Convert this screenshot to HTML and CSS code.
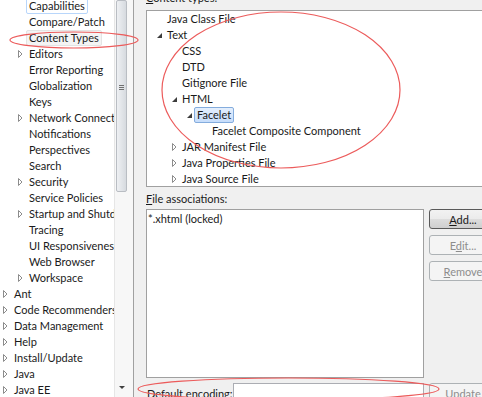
FILE: index.html
```html
<!DOCTYPE html>
<html>
<head>
    <meta charset="UTF-8">
    <title>Preferences - Content Types</title>
    <link rel="stylesheet" href="styles.css">
</head>
<body>
    <div class="window">
        <div class="nav">
            <div class="nav-tree">
                <div class="row l2"><span class="exp"></span><span class="label hover">Capabilities</span></div>
                <div class="row l2"><span class="exp"></span><span class="label">Compare/Patch</span></div>
                <div class="row l2"><span class="exp"></span><span class="label current">Content Types</span></div>
                <div class="row l2"><span class="exp"><svg width="11" height="16"><path d="M3.5 4.5 V11.5 L7 8 Z" class="closed"/></svg></span><span class="label">Editors</span></div>
                <div class="row l2"><span class="exp"></span><span class="label">Error Reporting</span></div>
                <div class="row l2"><span class="exp"></span><span class="label">Globalization</span></div>
                <div class="row l2"><span class="exp"></span><span class="label">Keys</span></div>
                <div class="row l2"><span class="exp"><svg width="11" height="16"><path d="M3.5 4.5 V11.5 L7 8 Z" class="closed"/></svg></span><span class="label">Network Connections</span></div>
                <div class="row l2"><span class="exp"></span><span class="label">Notifications</span></div>
                <div class="row l2"><span class="exp"></span><span class="label">Perspectives</span></div>
                <div class="row l2"><span class="exp"></span><span class="label">Search</span></div>
                <div class="row l2"><span class="exp"><svg width="11" height="16"><path d="M3.5 4.5 V11.5 L7 8 Z" class="closed"/></svg></span><span class="label">Security</span></div>
                <div class="row l2"><span class="exp"></span><span class="label">Service Policies</span></div>
                <div class="row l2"><span class="exp"><svg width="11" height="16"><path d="M3.5 4.5 V11.5 L7 8 Z" class="closed"/></svg></span><span class="label">Startup and Shutdown</span></div>
                <div class="row l2"><span class="exp"></span><span class="label">Tracing</span></div>
                <div class="row l2"><span class="exp"></span><span class="label">UI Responsiveness Monitoring</span></div>
                <div class="row l2"><span class="exp"></span><span class="label">Web Browser</span></div>
                <div class="row l2"><span class="exp"><svg width="11" height="16"><path d="M3.5 4.5 V11.5 L7 8 Z" class="closed"/></svg></span><span class="label">Workspace</span></div>
                <div class="row l1"><span class="exp"><svg width="11" height="16"><path d="M3.5 4.5 V11.5 L7 8 Z" class="closed"/></svg></span><span class="label">Ant</span></div>
                <div class="row l1"><span class="exp"><svg width="11" height="16"><path d="M3.5 4.5 V11.5 L7 8 Z" class="closed"/></svg></span><span class="label">Code Recommenders</span></div>
                <div class="row l1"><span class="exp"><svg width="11" height="16"><path d="M3.5 4.5 V11.5 L7 8 Z" class="closed"/></svg></span><span class="label">Data Management</span></div>
                <div class="row l1"><span class="exp"><svg width="11" height="16"><path d="M3.5 4.5 V11.5 L7 8 Z" class="closed"/></svg></span><span class="label">Help</span></div>
                <div class="row l1"><span class="exp"><svg width="11" height="16"><path d="M3.5 4.5 V11.5 L7 8 Z" class="closed"/></svg></span><span class="label">Install/Update</span></div>
                <div class="row l1"><span class="exp"><svg width="11" height="16"><path d="M3.5 4.5 V11.5 L7 8 Z" class="closed"/></svg></span><span class="label">Java</span></div>
                <div class="row l1"><span class="exp"><svg width="11" height="16"><path d="M3.5 4.5 V11.5 L7 8 Z" class="closed"/></svg></span><span class="label">Java EE</span></div>
            </div>
            <div class="vscroll">
                <div class="thumb"><span class="grip"></span></div>
                <div class="arrow-down"></div>
            </div>
        </div>

        <div class="page">
            <div class="caption top"><u>C</u>ontent types:</div>
            <div class="tree-box">
                <div class="row t0"><span class="exp"></span><span class="label">Java Class File</span></div>
                <div class="row t0"><span class="exp"><svg width="12" height="16"><path d="M10 6 V11 H5 Z" class="open"/></svg></span><span class="label">Text</span></div>
                <div class="row t1"><span class="exp"></span><span class="label">CSS</span></div>
                <div class="row t1"><span class="exp"></span><span class="label">DTD</span></div>
                <div class="row t1"><span class="exp"></span><span class="label">Gitignore File</span></div>
                <div class="row t1"><span class="exp"><svg width="12" height="16"><path d="M10 6 V11 H5 Z" class="open"/></svg></span><span class="label">HTML</span></div>
                <div class="row t2"><span class="exp"><svg width="12" height="16"><path d="M10 6 V11 H5 Z" class="open"/></svg></span><span class="label selected">Facelet</span></div>
                <div class="row t3"><span class="exp"></span><span class="label">Facelet Composite Component</span></div>
                <div class="row t1"><span class="exp"><svg width="12" height="16"><path d="M5.5 4.5 V11.5 L9 8 Z" class="closed"/></svg></span><span class="label">JAR Manifest File</span></div>
                <div class="row t1"><span class="exp"><svg width="12" height="16"><path d="M5.5 4.5 V11.5 L9 8 Z" class="closed"/></svg></span><span class="label">Java Properties File</span></div>
                <div class="row t1"><span class="exp"><svg width="12" height="16"><path d="M5.5 4.5 V11.5 L9 8 Z" class="closed"/></svg></span><span class="label">Java Source File</span></div>
            </div>

            <div class="caption"><u>F</u>ile associations:</div>
            <div class="assoc">
                <div class="list-box">
                    <div class="list-item">*.xhtml (locked)</div>
                </div>
                <div class="buttons">
                    <button class="btn default"><u>A</u>dd...</button>
                    <button class="btn" disabled>E<u>d</u>it...</button>
                    <button class="btn" disabled><u>R</u>emove</button>
                </div>
            </div>

            <div class="encoding">
                <label class="enc-label">Default encoding:</label>
                <input class="enc-input" type="text">
                <button class="btn" disabled>Update</button>
            </div>
        </div>

        <!-- red marks drawn over the screenshot -->
        <svg class="marks" width="482" height="397">
            <ellipse cx="74" cy="40" rx="64" ry="8"/>
            <ellipse cx="281" cy="90" rx="119" ry="78"/>
            <ellipse cx="288.5" cy="389" rx="150.5" ry="11"/>
        </svg>
    </div>
</body>
</html>
```

FILE: styles.css
```css
body {
    margin: 0;
    padding: 0;
    font-family: Lato, "Liberation Sans", sans-serif;
    font-size: 11px;
    color: #1a1a1a;
    background-color: #f0f0f0;
}

.window {
    position: relative;
    display: flex;
    width: 482px;
    height: 397px;
    overflow: hidden;
    background-color: #f0f0f0;
}

/* left preference tree */

.nav {
    display: flex;
    width: 133px;
    flex-shrink: 0;
    background: #fff;
    border-right: 1px solid #a0a0a0;
}

.nav-tree {
    width: 114px;
    flex-shrink: 0;
    overflow: hidden;
    margin-top: -2px;
}

.row {
    display: flex;
    align-items: center;
    height: 16px;
    white-space: nowrap;
}

.exp {
    display: inline-block;
    width: 11px;
    height: 16px;
    flex-shrink: 0;
}

.exp svg {
    display: block;
}

.closed {
    fill: #fff;
    stroke: #8c8c8c;
    stroke-width: 1;
}

.open {
    fill: #3c3c3c;
}

.label {
    display: inline-block;
    height: 14px;
    line-height: 14px;
    padding: 0 2px;
    border: 1px solid transparent;
    border-radius: 2px;
}

.l1 {
    padding-left: 0;
}

.l2 {
    padding-left: 15px;
}

.label.hover {
    border-color: #b8d6fb;
}

.label.current {
    background: #f4f4f4;
    border-color: #e4e4e4;
}

.vscroll {
    display: flex;
    flex-direction: column;
    width: 18px;
    background: #f7f7f7;
    border-left: 1px solid #e6e6e6;
}

.thumb {
    position: relative;
    width: 9px;
    height: 190px;
    margin-left: 1px;
    border: 1px solid #b9bdc3;
    border-radius: 2px;
    background: linear-gradient(to right, #eef0f3, #d6dadf);
}

.grip {
    display: block;
    width: 5px;
    height: 5px;
    margin: 84px auto 0;
    background: repeating-linear-gradient(#707070 0 1px, transparent 1px 2px);
}

.arrow-down {
    width: 0;
    height: 0;
    margin: auto 0 8px 4px;
    border-left: 3px solid transparent;
    border-right: 3px solid transparent;
    border-top: 3px solid #404040;
}

/* right page */

.page {
    flex: 1;
    min-width: 0;
    display: flex;
    flex-direction: column;
    padding-left: 12px;
    overflow: hidden;
}

.caption {
    height: 16px;
    line-height: 16px;
    margin: 4px 0 2px;
    white-space: nowrap;
}

.caption.top {
    margin: -10px 0 4px;
}

.tree-box {
    width: 360px;
    height: 175px;
    flex-shrink: 0;
    background: #fff;
    border: 1px solid #a0a0a0;
    border-right: none;
}

.tree-box .exp {
    width: 12px;
}

.t0 {
    padding-left: 5px;
}

.t1 {
    padding-left: 20px;
}

.t2 {
    padding-left: 35px;
}

.t3 {
    padding-left: 50px;
}

.label.selected {
    background: linear-gradient(#e4effd, #c6ddfb);
    border-color: #84acdd;
}

.assoc {
    display: flex;
    gap: 5px;
    flex-shrink: 0;
}

.list-box {
    width: 276px;
    height: 167px;
    flex-shrink: 0;
    background: #fff;
    border: 1px solid #a0a0a0;
}

.list-item {
    height: 16px;
    line-height: 16px;
    padding: 1px 1px 0;
}

.buttons {
    display: flex;
    flex-direction: column;
    gap: 6px;
}

.btn {
    width: 68px;
    height: 20px;
    padding: 0;
    flex-shrink: 0;
    font-family: inherit;
    font-size: 11px;
    color: #1a1a1a;
    border: 1px solid #707070;
    border-radius: 3px;
    background: linear-gradient(#f2f2f2 0%, #ebebeb 50%, #dddddd 51%, #cfcfcf 100%);
}

.btn.default {
    border-color: #5a5a5a;
}

.btn:disabled {
    color: #8d8d8d;
    border-color: #adb2b5;
    background: #f4f4f4;
}

.encoding {
    display: flex;
    align-items: center;
    margin-top: 5px;
    white-space: nowrap;
}

.enc-label {
    width: 86px;
    flex-shrink: 0;
    padding-left: 1px;
}

.enc-input {
    width: 191px;
    height: 20px;
    flex-shrink: 0;
    margin: 0 5px 0 0;
    padding: 0;
    box-sizing: border-box;
    border: 1px solid #abadb3;
    background: #fff;
}

.marks {
    position: absolute;
    top: 0;
    left: 0;
    pointer-events: none;
}

.marks ellipse {
    fill: none;
    stroke: #ec5b5b;
    stroke-width: 1.2;
}
```
